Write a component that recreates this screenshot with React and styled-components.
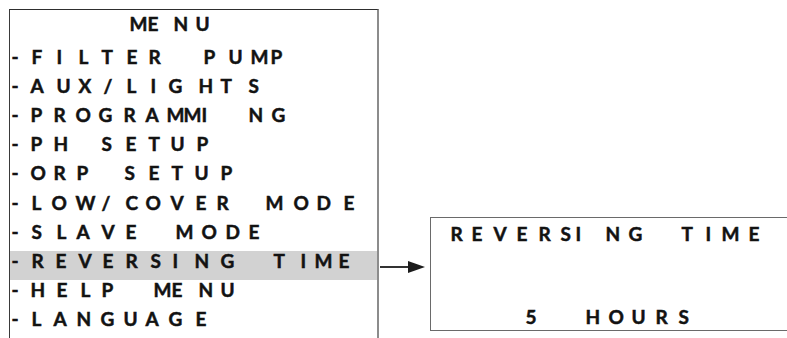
import React from 'react';
import styled, { createGlobalStyle } from 'styled-components';

const Global = createGlobalStyle`
    html, body {
        margin: 0;
        padding: 0;
        background: #ffffff;
        overflow: hidden;
    }
    body {
        font-family: Lato, "Open Sans", sans-serif;
    }`;

// left edge of every glyph, as read off the display (page x)
const MENU_TITLE = ['MENU', [131, 149, 175, 197]];

const MENU_ROWS = [
    ['-FILTERPUMP', [13, 33, 58, 80, 103, 128, 150, 205, 230, 252, 272]],
    ['-AUX/LIGHTS', [13, 32, 58, 80, 105, 128, 152, 170, 200, 222, 250]],
    ['-PROGRAMMING', [13, 32, 55, 77, 100, 125, 147, 168, 185, 203, 250, 273]],
    ['-PHSETUP', [13, 32, 55, 103, 127, 150, 172, 198]],
    ['-ORPSETUP', [13, 32, 55, 78, 126, 150, 173, 196, 222]],
    ['-LOW/COVERMODE', [13, 33, 53, 77, 103, 127, 147, 172, 197, 218, 267, 295, 318, 345]],
    ['-SLAVEMODE', [13, 33, 58, 78, 103, 127, 177, 203, 227, 250]],
    ['-REVERSINGTIME', [13, 33, 57, 80, 104, 127, 152, 174, 196, 222, 275, 302, 316, 340], true],
    ['-HELPMENU', [13, 32, 58, 82, 103, 155, 173, 200, 222]],
    ['-LANGUAGE', [13, 33, 55, 78, 102, 125, 147, 170, 197]],
];

const DETAIL_TITLE = ['REVERSINGTIME', [452, 473, 495, 518, 540, 562, 577, 607, 630, 683, 707, 723, 750]];
const DETAIL_VALUE = ['5HOURS', [527, 587, 610, 633, 657, 680]];

const BEARING = 1.5;

const Glyphs = ({ text, xs, origin }) => (
    <>
        {text.split('').map((c, i) => (
            <Cell
                key={i}
                style={{
                    marginLeft: i === 0 ? xs[0] - origin - BEARING : 0,
                    width: i < xs.length - 1 ? xs[i + 1] - xs[i] : 20,
                }}
            >
                {c}
            </Cell>
        ))}
    </>
);

const Arrow = () => (
    <svg width="46" height="16" viewBox="0 0 46 16">
        <line x1="0" y1="7" x2="30" y2="7" stroke="#1c1c1c" strokeWidth="1.8" />
        <polygon points="28,1 45,7 28,13" fill="#1c1c1c" />
    </svg>
);

export default function App() {
    return (
        <Page>
            <Global />
            <MenuPanel>
                <TitleRow>
                    <Glyphs text={MENU_TITLE[0]} xs={MENU_TITLE[1]} origin={10} />
                </TitleRow>
                {MENU_ROWS.map(([text, xs, selected]) => (
                    <MenuRow key={text} $selected={selected}>
                        <Glyphs text={text} xs={xs} origin={10} />
                    </MenuRow>
                ))}
            </MenuPanel>
            <ArrowSlot>
                <Arrow />
            </ArrowSlot>
            <DetailPanel>
                <DetailRow>
                    <Glyphs text={DETAIL_TITLE[0]} xs={DETAIL_TITLE[1]} origin={431} />
                </DetailRow>
                <DetailRow>
                    <Glyphs text={DETAIL_VALUE[0]} xs={DETAIL_VALUE[1]} origin={431} />
                </DetailRow>
            </DetailPanel>
        </Page>
    );
}

const Page = styled.div`
    display: flex;
    align-items: flex-start;
    padding: 9px 0 0 9px;
    width: 1000px;
    height: 338px;
    box-sizing: border-box;
    color: #121212;
    font-family: Lato, "Open Sans", sans-serif;
    font-weight: 700;
    font-size: 19px;
    -webkit-text-stroke: 0.5px #121212;`;

const MenuPanel = styled.div`
    flex: 0 0 auto;
    width: 370px;
    height: 360px;
    box-sizing: border-box;
    border-top: 1px solid #2e2e2e;
    border-left: 1px solid #3a3a3a;
    border-right: 2px solid #8c8c8c;
    padding-top: 3.6px;`;

const Line = styled.div`
    display: flex;
    align-items: flex-start;
    line-height: 20px;
    white-space: nowrap;`;

const TitleRow = styled(Line)`
    height: 33px;`;

const MenuRow = styled(Line)`
    height: 29.2px;
    background: ${p => (p.$selected ? '#d2d2d2' : 'transparent')};`;

const Cell = styled.span`
    display: inline-block;
    flex: 0 0 auto;
    overflow: visible;`;

const ArrowSlot = styled.div`
    flex: 0 0 auto;
    margin: 251px 0 0 1px;
    height: 16px;
    line-height: 0;`;

const DetailPanel = styled.div`
    flex: 0 0 auto;
    display: flex;
    flex-direction: column;
    justify-content: space-between;
    margin: 208px 0 0 4px;
    width: 420px;
    height: 114px;
    box-sizing: border-box;
    border: 1px solid #6a6a6a;
    padding: 5.6px 0 3px;`;

const DetailRow = styled(Line)`
    height: 20px;`;
